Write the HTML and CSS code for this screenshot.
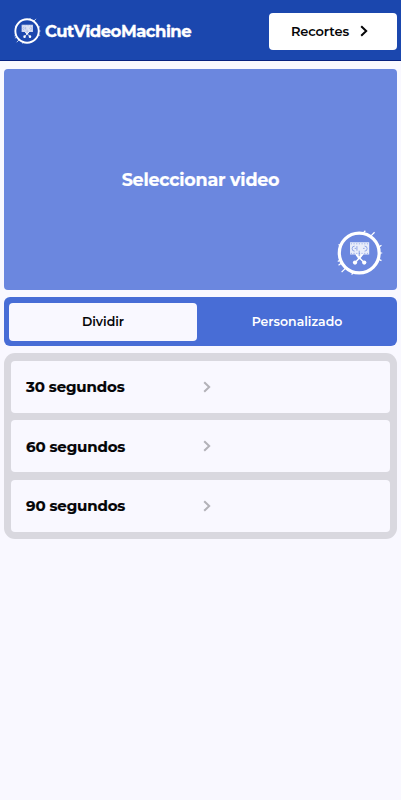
FILE: index.html
```html
<!DOCTYPE html>
<html lang="es">
<head>
	<meta charset="UTF-8">
	<meta name="viewport" content="width=device-width, initial-scale=1">
	<title>CutVideoMachine</title>
	<link rel="stylesheet" href="styles.css">
</head>
<body>

<svg width="0" height="0" class="symbols">
	<symbol id="logo" viewBox="0 0 60 60">
		<g fill="none" stroke="currentColor">
			<circle cx="29" cy="30" r="26" stroke-width="4.2" />
			<!-- saw teeth -->
			<path stroke-width="1.6" d="M34 4l3-3M44 8l5-5M55 22l3-2M56 30h3M54 38l4 2M4 20l-2-1M4 39l-3 2M6 43l-4 3M11 50l-5 5M22 55l-3 3" />
			<!-- scissors -->
			<path stroke-width="1.8" d="M34 31L25 41M25 32l9 9" />
		</g>
		<circle cx="23.5" cy="42.5" r="2.8" fill="currentColor" />
		<circle cx="35.5" cy="42.5" r="2.8" fill="currentColor" />
		<!-- film strip -->
		<path fill="currentColor" opacity=".85" d="M17 16h25v16h-8l-4 6h-2l-4-6h-7z" />
		<g class="logo-cut" fill="none">
			<path stroke-width=".8" stroke-dasharray="1.5 2" d="M18 18h23M18 30.500h23" />
			<path stroke-width=".9" d="M23 21a3.300 3.300 0 1 0 0 6.600M36 21a3.300 3.300 0 1 1 0 6.600M23 24h2M34 24h2M26 21v6M29 27v7" />
		</g>
	</symbol>
	<symbol id="chevron" viewBox="0 0 8 12">
		<path fill="none" stroke="currentColor" stroke-width="2" d="M1.2 1.2L6.2 6l-5 4.8" />
	</symbol>
</svg>

<header class="header">
	<div class="brand">
		<svg class="brand-logo"><use href="#logo" /></svg>
		<span class="brand-name">CutVideoMachine</span>
	</div>
	<button class="clips"><span>Recortes</span><svg class="chevron"><use href="#chevron" /></svg></button>
</header>

<main class="main">
	<div class="picker">
		<span class="picker-text">Seleccionar video</span>
		<svg class="picker-logo"><use href="#logo" /></svg>
	</div>

	<div class="tabs">
		<button class="tab active"><span>Dividir</span></button>
		<button class="tab"><span>Personalizado</span></button>
	</div>

	<div class="list">
		<button class="row"><span>30 segundos</span><svg class="chevron"><use href="#chevron" /></svg></button>
		<button class="row"><span>60 segundos</span><svg class="chevron"><use href="#chevron" /></svg></button>
		<button class="row"><span>90 segundos</span><svg class="chevron"><use href="#chevron" /></svg></button>
	</div>
</main>

</body>
</html>
```

FILE: styles.css
```css
* {
	box-sizing: border-box;
}
body {
	margin: 0;
	min-height: 100vh;
	background: #f9f8ff;
	color: #050507;
	font-family: Montserrat, Inter, sans-serif;
}
button {
	border: 0;
	padding: 0;
	color: inherit;
	font: inherit;
}
.symbols {
	display: block;
}
.chevron {
	width: 8px;
	height: 12px;
}

.header {
	display: flex;
	align-items: center;
	justify-content: space-between;
	height: 61px;
	padding: 2px 4px 0 14px;
	background: #1b47ae;
	border-bottom: 1px solid #07217f;
}
.brand {
	display: flex;
	align-items: center;
	gap: 4px;
	color: #fff;
}
.brand-logo {
	width: 27px;
	height: 28px;
}
.brand-name {
	font-size: 16.5px;
	font-weight: 700;
	letter-spacing: -.52px;
	white-space: nowrap;
	-webkit-text-stroke: .3px currentColor;
}
.clips {
	display: flex;
	align-items: center;
	gap: 12px;
	width: 128px;
	height: 37px;
	padding-left: 22px;
	background: #fff;
	border-radius: 4px;
	font-size: 13px;
	font-weight: 600;
	letter-spacing: -.15px;
}
.clips .chevron {
	margin-left: -1px;
}

.main {
	display: flex;
	flex-direction: column;
	gap: 7px;
	padding: 7.5px 4px;
}
.picker {
	position: relative;
	display: flex;
	align-items: center;
	justify-content: center;
	height: 221.5px;
	background: #6b87df;
	border-radius: 4px;
	color: #fff;
}
.picker-text {
	padding-top: 1px;
	font-size: 17.5px;
	font-weight: 700;
	letter-spacing: -.22px;
	-webkit-text-stroke: .2px currentColor;
}
.picker-logo {
	position: absolute;
	right: 14px;
	bottom: 14px;
	width: 46px;
	height: 46px;
}
.logo-cut {
	stroke: #6b87df;
}

.tabs {
	display: grid;
	grid-template-columns: 188px 1fr;
	height: 49px;
	padding: 6px 5px 5px;
	background: #486dd6;
	border-radius: 6px;
}
.tab {
	padding: 0 0 1px 5px;
	background: none;
	border-radius: 4px;
	color: #fff;
	font-size: 12.5px;
	font-weight: 600;
}
.tab.active {
	padding-left: 0;
	background: #f9f8ff;
	color: #050507;
}

.list {
	display: flex;
	flex-direction: column;
	gap: 7.5px;
	height: 186px;
	padding: 7.5px 7px;
	background: #d9d8df;
	border-radius: 11px;
}
.row {
	flex: 1;
	display: grid;
	grid-template-columns: 177px 8px;
	align-items: center;
	padding-left: 15px;
	background: #f9f8ff;
	border-radius: 4px;
	text-align: left;
	font-size: 15px;
	font-weight: 700;
	letter-spacing: -.15px;
	-webkit-text-stroke: .2px currentColor;
}
.row .chevron {
	color: #b3b2b8;
}
```
